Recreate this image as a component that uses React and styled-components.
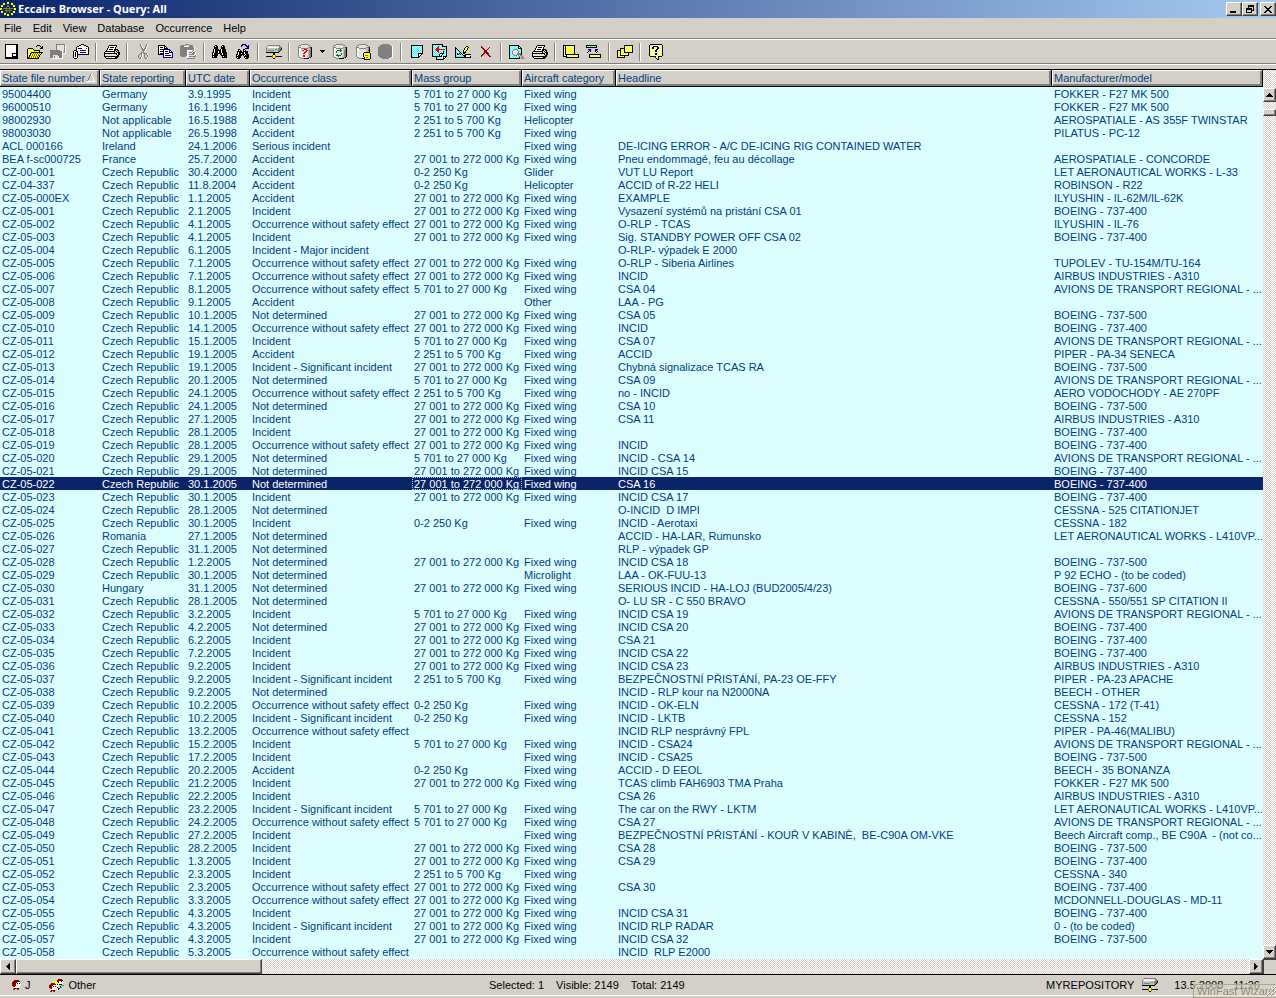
import React, { Component } from 'react';
import styled, { createGlobalStyle } from 'styled-components';

const GlobalStyle = createGlobalStyle`
  body {
    margin: 0;
    background: #d4d0c8;
    font-family: 'Liberation Sans', Arial, sans-serif;
    font-size: 11px;
    line-height: 13px;
    color: #000;
  }
  button {
    font: inherit;
    color: inherit;
    padding: 0;
    margin: 0;
    border: 0;
    background: none;
  }
`

const Window = styled.div`
  display: flex;
  flex-direction: column;
  min-height: 100vh;
  background: #d4d0c8;
`

const TitleBar = styled.header`
  display: flex;
  align-items: center;
  height: 18px;
  background: linear-gradient(to right, #0a246a, #a6caf0);
`

const Title = styled.h1`
  flex-grow: 1;
  margin: 0;
  padding-left: 1px;
  color: #fff;
  font-family: 'Noto Sans', Tahoma, sans-serif;
  font-size: 11px;
  font-weight: bold;
  line-height: 18px;
`

const WindowButtons = styled.div`
  display: flex;
`

const RaisedButton = styled.button`
  display: flex;
  align-items: center;
  justify-content: center;
  flex: none;
  box-sizing: border-box;
  width: ${props => props.$width || 16}px;
  height: ${props => props.$height || 14}px;
  margin-left: ${props => props.$gap || 0}px;
  background: #d4d0c8;
  border: 1px solid;
  border-color: #fff #404040 #404040 #fff;
  box-shadow: inset -1px -1px 0 #808080;
`

const MenuBar = styled.nav`
  display: flex;
  gap: 11px;
  height: 20px;
  padding: 0 4px;
  border-bottom: 1px solid #808080;
`

const MenuItem = styled.button`
  line-height: 20px;
`

const ToolBar = styled.div`
  display: flex;
  align-items: center;
  height: 23px;
  border-top: 1px solid #fff;
  border-bottom: 1px solid #808080;
`

const ToolButton = styled.button`
  display: flex;
  align-items: flex-start;
  justify-content: center;
  width: ${props => props.$narrow ? 12 : 23}px;
  height: 17px;
  align-items: center;
`

const Separator = styled.div`
  width: 1px;
  height: 18px;
  margin: 0 3px;
  border-left: 1px solid #808080;
  border-right: 1px solid #fff;
  box-sizing: border-box;
  flex: 0 0 2px;
`

const Gap = styled.div`
  height: 4px;
  border-top: 1px solid #fff;
`

const Sheet = styled.main`
  display: flex;
  border-top: 1px solid #000;
`

const Table = styled.table`
  flex: 1;
  width: 100%;
  min-width: 0;
  table-layout: fixed;
  border-spacing: 0;
  border-bottom: 1px solid #ddfeff;
  background: #ddfeff;
  color: #004080;
`

const Col = styled.col`
  width: ${props => props.$width ? props.$width + 'px' : 'auto'};
`

const HeadCell = styled.th`
  height: 16px;
  padding: 0;
  background: #000;
  border-bottom: 1px solid #000;
  font-weight: normal;
  text-align: left;
`

const HeadLabel = styled.div`
  display: flex;
  align-items: center;
  justify-content: space-between;
  box-sizing: border-box;
  height: 16px;
  margin-right: 1px;
  padding: 0 3px 0 1px;
  background: #d4d0c8;
  border: 1px solid;
  border-color: #fff #808080 #808080 #fff;
  box-shadow: inset -1px -1px 0 #808080;
  white-space: nowrap;
  overflow: hidden;
`

const Row = styled.tr`
  background: ${props => props.$selected ? '#0a246a' : 'transparent'};
  color: ${props => props.$selected ? '#fff' : 'inherit'};
`

const Cell = styled.td`
  height: 11px;
  padding: 2px 0 0 2px;
  line-height: 11px;
  white-space: pre;
  overflow: hidden;
  outline: ${props => props.$focused ? '1px dotted #a6caf0' : 'none'};
  outline-offset: -1px;
`

const hatch = 'repeating-conic-gradient(#fff 0 25%, #d4d0c8 0 50%) 0 0 / 2px 2px'

const VerticalScroll = styled.div`
  display: flex;
  flex-direction: column;
  flex: 0 0 13px;
  padding-top: 18px;
  background: ${hatch};
`

const VerticalTrack = styled.div`
  flex: 1;
  padding-top: 7px;
`

const HorizontalScroll = styled.div`
  display: flex;
  height: 15px;
  border-bottom: 1px solid #000;
  background: ${hatch};
`

const HorizontalTrack = styled.div`
  flex: 1;
`

const Corner = styled.div`
  box-sizing: border-box;
  width: 13px;
  background: #d4d0c8;
  border-left: 1px solid #404040;
  border-top: 1px solid #404040;
`

const StatusBar = styled.footer`
  display: grid;
  grid-template-columns: 489px 1fr auto;
  align-items: center;
  height: 20px;
  border-bottom: 1px solid #fff;
`

const StatusGroup = styled.div`
  display: flex;
  align-items: center;
  gap: ${props => props.$gap}px;
  padding: ${props => props.$padding || 0};
  white-space: nowrap;
`

const StatusItem = styled.span`
  display: flex;
  align-items: center;
  gap: 4px;
`

const Overlay = styled.div`
  position: fixed;
  right: 0;
  bottom: 0;
  box-sizing: border-box;
  width: 83px;
  height: 14px;
  padding-left: 3px;
  border: 1px solid #a8a490;
  border-right: 0;
  background: rgba(220, 216, 196, 0.6);
  color: #8c8a80;
  line-height: 13px;
  white-space: nowrap;
`

const Grip = styled.svg`
  position: absolute;
  right: 0;
  bottom: 1px;
`

const PALETTE = {
  k: '#000', w: '#fff', g: '#808080', l: '#c0c0c0', s: '#e4e4e4', y: '#ffff00', Y: '#ffff99',
  c: '#50f4fa', C: '#c0ffff', b: '#000080', B: '#3060c0', r: '#f00000', m: '#900000', n: '#007020',
  N: '#00d000', o: '#808000', p: '#e8b090',
}

const ICONS = {
  create: [
    'kkkkkkkkkkkkk', 'kwwwwwwwwwwkk', 'kwwwwwwwwwwkk', 'kwwwwwwwwwwkk', 'kwwwwwwwwwwkk',
    'kwwwwwwwwwwkk', 'kwwwwwwwwwwkk', 'kwwwwwwwwwwkk', 'kwwwwwwwwwwkk', 'kwwwwwwkkkkkk',
    'kwwwwwwkwwwkk', 'kwwwwwwkwwwkk', 'kwwwwwwkkkkkk', 'kkkkkkkkkkkkk', 'kkkkkkkkkkkkk',
  ],
  open: [
    '..........kkk...', '.........k...k.k', '..............kk', '.kkkkk.......kkk', 'kyYyYyk.........',
    'kYyYyYykkkkkk...', 'kyYyYyYyYyYyk...', 'kYyYkkkkkkkkkkkk', 'kyYkoyoyoyoyoyk.', 'kYykyoyoyoyoyk..',
    'kykoyoyoyoyok...', 'kYkyoyoyoyoyk...', 'kkoyoyoyoyok....', 'kkkkkkkkkkkk....',
  ],
  saveAll: [
    '......ggggggggg.', '......gsssssssgw', '......gsssssssgw', '......gsssssssgw', '......gsssssssgw',
    '......gsssssssgw', 'ggggggggggssssgw', 'ggggggggggggssgw', 'ggggggggggggwggw', 'ggggggggggggwwww',
    'ggggggggggggw...', 'gggsssssggggw...', 'gggsgssssgggw...', 'gggsgssssgggw...', '.wwwwwwwwwwww...',
  ],
  mail: [
    '........kkk.....', '......kkwwwkk...', '....kkwwwwwwwkk.', '...kwwwwwwwwwwwk', '...kwbbbbwwwwrwk',
    '...kwwwwwwwwwwwk', '.kkkwwwbbbbbbwwk', 'kwwkkwwwwwwwwwwk', 'kwkwkwwbbbbbbwwk', 'kwkwkwwwwwwwwwwk',
    'kwkwkkkkkkkkkkkk', 'kwkwk...........', 'kwkwk...........', 'kwwwk...........', '.kkk............',
  ],
  print: [
    '.....kkkkkkkk...', '....kwwwwwwwk...', '....kwkkkkwk....', '...kwwwwwwwk....', '...kwkkkkwkkkk..',
    '..kwwwwwwwkkskk.', '.kkkkkkkkkksksk.', 'ksssssssssksskkk', 'kkkkkkkkkkkkkskk', 'kssssssyyysskskk',
    'ksssssssssssskk.', 'kkkkkkkkkkkkkkk.', '.kssssssssskkk..', '..kkkkkkkkkkk...',
  ],
  cut: [
    '..g.....g.', '..gw....gw', '..ggw..ggw', '...gw..gw.', '...ggwggw.', '....gggw..', '....gggw..',
    '.....gw...', '...ggggw..', '..ggwgggg.', '.g.gw.g.gw', 'g..gw.g..g', 'g..gw.g..g', 'g.gw..g.gw', '.ggw...ggw',
  ],
  copy: [
    'kkkkkkk.......', 'kwwwwwkk......', 'kwkkkwkwk.....', 'kwwwwwkkkk....', 'kwkkkbbbbbbb..', 'kwwwwbwwwwwbb.',
    'kwkkkbwbbbwbwb', 'kwwwwbwwwwwbbbb', 'kwkkkbwbbbbwwwb', 'kkkkkbwwwwwwwwb', '.....bwbbbbbbwb', '.....bwwwwwwwwb', '.....bbbbbbbbbb',
  ],
  paste: [
    '.....gggg.......', '.gggg....gggg...', 'ggggwwwwwggggw..', 'ggggggggggggggw.', 'ggggggggggggggw.', 'ggggggggggggggw.',
    'gggggggwwwwwwgw.', 'gggggggwssssgw..', 'gggggggwsgggwggw', 'gggggggwssssgggw', 'gggggggwsgggggsw', 'gggggggwsssssssgw',
    '.gggggwwsggggggg', '.......wssssssgw', '.......gggggggg.',
  ],
  find: [
    '...kk.....kk....', '..kwkk...kwkk...', '..kkkk...kkkk...', '..kkkk...kkkk...', '.kwkkkk.kwkkkk..', '.kwkkkkkkwkkkk..',
    '.kwkkkwkkwkkkk..', 'kkwkkkwkkwkkkkk.', 'kwkkkkkkkkwkkkk.', 'kwkkkk..kkwkkkk.', 'kkkkkk...kkkkkk.', 'kwkkk.....kwkkk.', 'kkkkk.....kkkkk.',
  ],
  findNext: [
    '......bbbb....', '.....bb..bb.b.', '.....b....bbb.', '...........bb.', '.........bbbb.', '..kk...kk.....', '..kwk..kwk....',
    '.kkkkk.kkkkk..', '.kwkkkkkwkkk..', '.kwkkwkkwkkk..', 'kkwkkkkkkwkkk.', 'kwkkkk.kwkkkk.', 'kkkkk...kkkkk.', 'kwkkk...kwkkk.', '.kkk.....kkk..',
  ],
  drive: [
    '..gggggggggggg..', '.gsssssssssssgg.', 'gwwwwwwwwwwwwggg', 'glllllllllllgggk', 'gllllllllNNlgggk',
    'glggggggllllggk.', 'glllllllllllgk..', 'kkkkkkkkkkkkk...', '.......kk.......', '.......kk.......',
    '......oyyo......', 'kkkkkkoyyokkkkkk', '......oyyo......', '.......kk.......',
  ],
  query: [
    '....ggggggg....', '..ggsssssssgg..', '.gsssssssssssg.', '.gggsssssssgggk', '.gwwgggggggllgk', '.gwwsssrrrsllgk', '.gwssrrssrrlggk',
    '.gwsssssrrslggk', '.gwssssrrsslggk', '.gwsssrrssslggk', '.gwsssssssslggk', '.gwsssrrssslggk', '.gwwssrrssllggk', '..ggsssssslggk.', '....gggkkkkk...',
  ],
  refresh: [
    '....ggggggg....', '..ggsssssssgg..', '.gsssssssssssg.', '.gggsssssssgggk', '.gwwgggggggllgk', '.gwwssssnssllgk', '.gwssnnnnnslggk',
    '.gwsnsssnsslggk', '.gwsnsssssslggk', '.gwssssssnslggk', '.gwssnsssnslggk', '.gwsnnnnnsslggk', '.gwwssnsssllggk', '..ggsssssslggk.', '....gggkkkkk...',
  ],
  note: [
    '....ggggggg.....', '..ggsssssssgg...', '.gsssssssssssg..', '.gggsssssssgggk.', '.gwwgggggggllgk.', '.gwwsssssssllgk.', '.gwssssssssllgk.',
    '.gwssssssssllgk.', '.gwsssssskkkkkk.', '.gwssssskyyyyyyk', '.gwssssskyyyyyyk', '.gwssssskyoooyyk', '.gwwsssskyyyyyyk', '..ggssssskyooyyk', '....gggkkkyyyyyk', '.........kkkkkk.',
  ],
  stop: [
    '....ggggggg....', '..gggggggggggw.', '.gggggggggggggw', 'ggggggggggggggw', 'ggggggggggggggw', 'ggggggggggggggw', 'ggggggggggggggw',
    'ggggggggggggggw', 'ggggggggggggggw', 'ggggggggggggggw', 'ggggggggggggggw', 'ggggggggggggggw', '.gggggggggggggw', '..gggggggggggww', '....gggggggww..',
  ],
  page: [
    'kkkkkkkkkkkk', 'kcCcCcCcCcCk', 'kCcCcCcCcCck', 'kcCcCcCcCcCk', 'kCcCcCcCcCck', 'kcCcCcCcCcCk', 'kCcCcCcCcCck',
    'kcCcCcCcCcCk', 'kCcCcCckkkkk', 'kcCcCcCkwwk.', 'kCcCcCckwk..', 'kcCcCcCkk...', 'kkkkkkkk....',
  ],
  pageBack: [
    'kkkkkkkkkkk.....', 'kcCcCcCcCck.....', 'kCcCcCrcCckkkkk.', 'kcCcCrrCcCcCcCk.', 'kCcCrrrcCcCcCck.', 'kcCrrrrrrrrrrCk.', 'kCcCrrrcCcCcCck.',
    'kcCcCrrCcCckcCk.', 'kCcCcCrcCcCkCck.', 'kcCcCcCckkkkcCk.', 'kCcCcCckwwkcCck.', 'kcCcCcCkwkCcCck.', 'kkkkkkkkkkCkkkk.', '....kcCcCcCkwk..', '....kCcCcCckk...', '....kkkkkkkk....',
  ],
  design: [
    '...........kk...', 'k.........kyyk..', 'kk.......kyyk...', 'kck......kyyk...', 'kcck....kyyk....', 'kcCck...kyk.....', 'kcCCck..kkk.....',
    'kck.kck.kk......', 'kckk.kck..kkkkkk', 'kcCCCCcckkkswsws', 'kcccccccckkwwwwk', 'kkkkkkkkkkkkkkkk',
  ],
  remove: [
    'm.........', 'mm......m.', '.mm....m..', '..mm..m...', '...mmm....', '...mmm....', '...mmmm...', '..mm.mmm..', '.mm...mm..', 'mm.....mm.', 'm.......mm',
  ],
  preview: [
    'kkkkkkkkkk......', 'kcCcCcCcCkk.....', 'kCcCcCcCckwk....', 'kcCcCcCcCkkkk...', 'kCcCcgggcCcCk...', 'kcCcgwwsgcCck...', 'kCcgwssssgcCk...',
    'kcCgwssssgCck...', 'kcCgssssggggk...', 'kcCcgsssggggk...', 'kCcCcgggCgsgg...', 'kcCcCcCcCcgsgg..', 'kCcCcCcCcCkgsgg.', 'kkkkkkkkkkk.ggg.',
  ],
  notes: [
    'kkkkkkkkkkkk....', 'kwkYyYyYyYyk....', 'kwkyYyYyYyYk....', 'kwkYyYyYyYyk....', 'kwkyYyYyYyYk....', 'kwkYyYyYyYyk....', 'kwkyYyYyYyYk....',
    'kwkYyYyYyYyk....', 'kwkyYyYyYyYk....', 'kwkkkkkkkkkkkkkk', 'kwwkYyYyYyYyYyYk', 'kkkkyYyYyYyYyYyk', '...kkkkkkkkkkkkk',
  ],
  link: [
    'kkkkkkkkkkk....', 'kCcCcCcCcCk....', 'kkkkkkkkkkk....', '...............', '..bbb....bbb...', '...bb....bb....', '..b.b....b.b...',
    '.b........b....', '...............', '...kkkkkkkkkkkk', '...kYyYyYyYyYyk', '...kyYyYyYyYyYk', '...kkkkkkkkkkkk',
  ],
  cascade: [
    '.......kkkkkkkkk', '.......kYyYyYyYk', '.......kyYyYyYyk', '...kkkkkYyYyYyYk', '...kYyYkyYyYyYyk', 'kkkkyYykYyYyYyYk', 'kYykYyYkyYyYyYyk',
    'kyYkyYykkkkkkkkk', 'kYykYyYyYyYk....', 'kyYkyYyYyYyk....', 'kYykkkkkkkkk....', 'kyYyYyYk........', 'kkkkkkkk........',
  ],
  help: [
    '.kkkkkkkkkkkk.', 'kYYYYYYYYYYYYk', 'kYYYbbbbbYYYYk', 'kYYbbYYYbbYYYk', 'kYYbbYYYbbYYYk', 'kYYYYYYbbYYYYk', 'kYYYYYbbYYYYYk',
    'kYYYYYbbYYYYYk', 'kYYYYYYYYYYYYk', 'kYYYYYbbYYYYYk', 'kYYYYYbbYYYYYk', 'kYYYYYYYYYYYYk', '.kkkkkkYYkkkk.', '......kYYk....', '.......kYk....', '........kk....',
  ],
  person: [
    '..mmmmm..', '.mmmmmmm.', 'mmmmmwww.', 'mmmmwkwb.', 'mmmmwwwww', 'mmmmwwww.', '.mmwwwww.', '..wwwww..', '..krrrk..', '.rr..rr..',
  ],
  people: [
    '.........mmmm...', '........mmmmmm..', '.....yyymmwwbw..', '....yyyyymwwwww.', '..mmmmyyywwwww..', '.mmmmmmwbwkkk...', 'mmmmwwwyww..NNN.',
    'mmmwkwbww..k....', 'mmmwwwwwk..NN...', '.mmwwwww.bb.....', '..wwwww..b......', '..krrk..........', '.rr.rr..........',
  ],
  minimize: ['........', '........', '........', '........', '........', '........', 'kkkkkk..', 'kkkkkk..'],
  restore: ['..kkkkkk', '..kkkkkk', '..k....k', 'kkkkkk.k', 'kkkkkk.k', 'k....kkk', 'k....k..', 'kkkkkk..'],
  close: ['kk....kk', '.kk..kk.', '..kkkk..', '...kk...', '..kkkk..', '.kk..kk.', 'kk....kk'],
  up: ['...k...', '..kkk..', '.kkkkk.', 'kkkkkkk'],
  down: ['kkkkkkk', '.kkkkk.', '..kkk..', '...k...'],
  left: ['...k', '..kk', '.kkk', 'kkkk', '.kkk', '..kk', '...k'],
  right: ['k...', 'kk..', 'kkk.', 'kkkk', 'kkk.', 'kk..', 'k...'],
  dropdown: ['kkkkk', '.kkk.', '..k..'],
  sort: ['....gw...', '....gw...', '...g..w..', '...g..w..', '..g....w.', '..g....w.', '.g......w', '.wwwwwwww'],
}

// one rect for every run of equal pixels in a line
const PixelIcon = ({ name }) => {
  const lines = ICONS[name];
  const width = Math.max(...lines.map(line => line.length));
  const rects = [];
  lines.forEach((line, y) => {
    let x = 0;
    while (x < line.length) {
      let end = x + 1;
      while (line[end] === line[x]) end++;
      if (line[x] !== '.') {
        rects.push(<rect key={x + '-' + y} x={x} y={y} width={end - x} height={1} fill={PALETTE[line[x]]} />)
      }
      x = end;
    }
  })
  return (
    <svg width={width} height={lines.length} shapeRendering="crispEdges" aria-hidden="true">
      {rects}
    </svg>
  )
}

const Logo = () => {
  const stars = [];
  for (let i = 0; i < 12; i++) {
    const angle = i * Math.PI / 6;
    stars.push(<rect key={i} x={Math.round(8 + 7 * Math.cos(angle)) - 1} y={Math.round(8 + 6 * Math.sin(angle)) - 1} width="2" height="2" fill="#ffff00" />)
  }
  return (
    <svg width="17" height="16" shapeRendering="crispEdges" aria-hidden="true">
      {stars}
      <path d="M7 4h2v2h-2zM3 7h11v1h-11zM5 9h7v1h-7zM6 6h1v6h-1zM9 6h1v6h-1z" fill="#808000" />
    </svg>
  )
}

const TOOLS = [
  ['create', 'open', 'saveAll', 'mail'],
  ['print'],
  ['cut', 'copy', 'paste'],
  ['find', 'findNext'],
  ['drive'],
  ['query', 'dropdown', 'refresh', 'note', 'stop'],
  ['page', 'pageBack', 'design', 'remove'],
  ['preview', 'print'],
  ['notes', 'link'],
  ['cascade'],
  ['help'],
]

const COLUMNS = [
  { title: 'State file number', width: 100, sorted: true },
  { title: 'State reporting', width: 86 },
  { title: 'UTC date', width: 64 },
  { title: 'Occurrence class', width: 162 },
  { title: 'Mass group', width: 110 },
  { title: 'Aircraft category', width: 94 },
  { title: 'Headline' },
  { title: 'Manufacturer/model', width: 211 },
]

const CZ = 'Czech Republic';
const INC = 'Incident';
const ACC = 'Accident';
const SIG = 'Incident - Significant incident';
const OWSE = 'Occurrence without safety effect';
const ND = 'Not determined';
const M0 = '0-2 250 Kg';
const M2 = '2 251 to 5 700 Kg';
const M5 = '5 701 to 27 000 Kg';
const M27 = '27 001 to 272 000 Kg';
const FW = 'Fixed wing';
const B4 = 'BOEING - 737-400';
const B5 = 'BOEING - 737-500';
const AIRBUS = 'AIRBUS INDUSTRIES - A310';
const ATR = 'AVIONS DE TRANSPORT REGIONAL - ...';
const LET = 'LET AERONAUTICAL WORKS - L410VP...';

const ROWS = [
  ['95004400', 'Germany', '3.9.1995', INC, M5, FW, '', 'FOKKER - F27 MK 500'],
  ['96000510', 'Germany', '16.1.1996', INC, M5, FW, '', 'FOKKER - F27 MK 500'],
  ['98002930', 'Not applicable', '16.5.1988', ACC, M2, 'Helicopter', '', 'AEROSPATIALE - AS 355F TWINSTAR'],
  ['98003030', 'Not applicable', '26.5.1998', ACC, M2, FW, '', 'PILATUS - PC-12'],
  ['ACL 000166', 'Ireland', '24.1.2006', 'Serious incident', '', FW, 'DE-ICING ERROR - A/C DE-ICING RIG CONTAINED WATER', ''],
  ['BEA f-sc000725', 'France', '25.7.2000', ACC, M27, FW, 'Pneu endommagé, feu au décollage', 'AEROSPATIALE - CONCORDE'],
  ['CZ-00-001', CZ, '30.4.2000', ACC, M0, 'Glider', 'VUT LU Report', 'LET AERONAUTICAL WORKS - L-33'],
  ['CZ-04-337', CZ, '11.8.2004', ACC, M0, 'Helicopter', 'ACCID of R-22 HELI', 'ROBINSON - R22'],
  ['CZ-05-000EX', CZ, '1.1.2005', ACC, M27, FW, 'EXAMPLE', 'ILYUSHIN - IL-62M/IL-62K'],
  ['CZ-05-001', CZ, '2.1.2005', INC, M27, FW, 'Vysazení systémů na pristání CSA 01', B4],
  ['CZ-05-002', CZ, '4.1.2005', OWSE, M27, FW, 'O-RLP - TCAS', 'ILYUSHIN - IL-76'],
  ['CZ-05-003', CZ, '4.1.2005', INC, M27, FW, 'Sig. STANDBY POWER OFF CSA 02', B4],
  ['CZ-05-004', CZ, '6.1.2005', 'Incident - Major incident', '', '', 'O-RLP- výpadek E 2000', ''],
  ['CZ-05-005', CZ, '7.1.2005', OWSE, M27, FW, 'O-RLP - Siberia Airlines', 'TUPOLEV - TU-154M/TU-164'],
  ['CZ-05-006', CZ, '7.1.2005', OWSE, M27, FW, 'INCID', AIRBUS],
  ['CZ-05-007', CZ, '8.1.2005', OWSE, M5, FW, 'CSA 04', ATR],
  ['CZ-05-008', CZ, '9.1.2005', ACC, '', 'Other', 'LAA - PG', ''],
  ['CZ-05-009', CZ, '10.1.2005', ND, M27, FW, 'CSA 05', B5],
  ['CZ-05-010', CZ, '14.1.2005', OWSE, M27, FW, 'INCID', B4],
  ['CZ-05-011', CZ, '15.1.2005', INC, M5, FW, 'CSA 07', ATR],
  ['CZ-05-012', CZ, '19.1.2005', ACC, M2, FW, 'ACCID', 'PIPER - PA-34 SENECA'],
  ['CZ-05-013', CZ, '19.1.2005', SIG, M27, FW, 'Chybná signalizace TCAS RA', B5],
  ['CZ-05-014', CZ, '20.1.2005', ND, M5, FW, 'CSA 09', ATR],
  ['CZ-05-015', CZ, '24.1.2005', OWSE, M2, FW, 'no - INCID', 'AERO VODOCHODY - AE 270PF'],
  ['CZ-05-016', CZ, '24.1.2005', ND, M27, FW, 'CSA 10', B5],
  ['CZ-05-017', CZ, '27.1.2005', INC, M27, FW, 'CSA 11', AIRBUS],
  ['CZ-05-018', CZ, '28.1.2005', INC, M27, FW, '', B4],
  ['CZ-05-019', CZ, '28.1.2005', OWSE, M27, FW, 'INCID', B4],
  ['CZ-05-020', CZ, '29.1.2005', ND, M5, FW, 'INCID - CSA 14', ATR],
  ['CZ-05-021', CZ, '29.1.2005', ND, M27, FW, 'INCID CSA 15', B4],
  ['CZ-05-022', CZ, '30.1.2005', ND, M27, FW, 'CSA 16', B4],
  ['CZ-05-023', CZ, '30.1.2005', INC, M27, FW, 'INCID CSA 17', B4],
  ['CZ-05-024', CZ, '28.1.2005', ND, '', '', 'O-INCID  D IMPI', 'CESSNA - 525 CITATIONJET'],
  ['CZ-05-025', CZ, '30.1.2005', INC, M0, FW, 'INCID - Aerotaxi', 'CESSNA - 182'],
  ['CZ-05-026', 'Romania', '27.1.2005', ND, '', '', 'ACCID - HA-LAR, Rumunsko', LET],
  ['CZ-05-027', CZ, '31.1.2005', ND, '', '', 'RLP - výpadek GP', ''],
  ['CZ-05-028', CZ, '1.2.2005', ND, M27, FW, 'INCID CSA 18', B5],
  ['CZ-05-029', CZ, '30.1.2005', ND, '', 'Microlight', 'LAA - OK-FUU-13', 'P 92 ECHO - (to be coded)'],
  ['CZ-05-030', 'Hungary', '31.1.2005', ND, M27, FW, 'SERIOUS INCID - HA-LOJ (BUD2005/4/23)', 'BOEING - 737-600'],
  ['CZ-05-031', CZ, '28.1.2005', ND, '', '', 'O- LU SR - C 550 BRAVO', 'CESSNA - 550/551 SP CITATION II'],
  ['CZ-05-032', CZ, '3.2.2005', INC, M5, FW, 'INCID CSA 19', ATR],
  ['CZ-05-033', CZ, '4.2.2005', ND, M27, FW, 'INCID CSA 20', B4],
  ['CZ-05-034', CZ, '6.2.2005', INC, M27, FW, 'CSA 21', B4],
  ['CZ-05-035', CZ, '7.2.2005', INC, M27, FW, 'INCID CSA 22', B4],
  ['CZ-05-036', CZ, '9.2.2005', INC, M27, FW, 'INCID CSA 23', AIRBUS],
  ['CZ-05-037', CZ, '9.2.2005', SIG, M2, FW, 'BEZPEČNOSTNÍ PŘISTÁNÍ, PA-23 OE-FFY', 'PIPER - PA-23 APACHE'],
  ['CZ-05-038', CZ, '9.2.2005', ND, '', '', 'INCID - RLP kour na N2000NA', 'BEECH - OTHER'],
  ['CZ-05-039', CZ, '10.2.2005', OWSE, M0, FW, 'INCID - OK-ELN', 'CESSNA - 172 (T-41)'],
  ['CZ-05-040', CZ, '10.2.2005', SIG, M0, FW, 'INCID - LKTB', 'CESSNA - 152'],
  ['CZ-05-041', CZ, '13.2.2005', OWSE, '', '', 'INCID RLP nesprávný FPL', 'PIPER - PA-46(MALIBU)'],
  ['CZ-05-042', CZ, '15.2.2005', INC, M5, FW, 'INCID - CSA24', ATR],
  ['CZ-05-043', CZ, '17.2.2005', INC, '', FW, 'INCID - CSA25', B5],
  ['CZ-05-044', CZ, '20.2.2005', ACC, M0, FW, 'ACCID - D EEOL', 'BEECH - 35 BONANZA'],
  ['CZ-05-045', CZ, '21.2.2005', INC, M27, FW, 'TCAS climb FAH6903 TMA Praha', 'FOKKER - F27 MK 500'],
  ['CZ-05-046', CZ, '22.2.2005', INC, '', '', 'CSA 26', AIRBUS],
  ['CZ-05-047', CZ, '23.2.2005', SIG, M5, FW, 'The car on the RWY - LKTM', LET],
  ['CZ-05-048', CZ, '24.2.2005', OWSE, M5, FW, 'CSA 27', ATR],
  ['CZ-05-049', CZ, '27.2.2005', INC, '', FW, 'BEZPEČNOSTNÍ PŘISTÁNÍ - KOUŘ V KABINĚ,  BE-C90A OM-VKE', 'Beech Aircraft comp., BE C90A  - (not co...'],
  ['CZ-05-050', CZ, '28.2.2005', INC, M27, FW, 'CSA 28', B5],
  ['CZ-05-051', CZ, '1.3.2005', INC, M27, FW, 'CSA 29', B4],
  ['CZ-05-052', CZ, '2.3.2005', INC, M2, FW, '', 'CESSNA - 340'],
  ['CZ-05-053', CZ, '2.3.2005', OWSE, M27, FW, 'CSA 30', B4],
  ['CZ-05-054', CZ, '3.3.2005', OWSE, M27, FW, '', 'MCDONNELL-DOUGLAS - MD-11'],
  ['CZ-05-055', CZ, '4.3.2005', INC, M27, FW, 'INCID CSA 31', B4],
  ['CZ-05-056', CZ, '4.3.2005', SIG, M27, FW, 'INCID RLP RADAR', '0 - (to be coded)'],
  ['CZ-05-057', CZ, '4.3.2005', INC, M27, FW, 'INCID CSA 32', B5],
  ['CZ-05-058', CZ, '5.3.2005', OWSE, '', '', 'INCID  RLP E2000', ''],
]

class App extends Component {
  state = { row: 30, column: 4 }

  onSelect = (row, column) => {
    this.setState({ row, column });
  }

  renderTitleBar = () => {
    return (
      <TitleBar>
        <Logo />
        <Title>Eccairs Browser - Query: All</Title>
        <WindowButtons>
          <RaisedButton aria-label="Minimize"><PixelIcon name="minimize" /></RaisedButton>
          <RaisedButton aria-label="Restore"><PixelIcon name="restore" /></RaisedButton>
          <RaisedButton $gap={2} aria-label="Close"><PixelIcon name="close" /></RaisedButton>
        </WindowButtons>
      </TitleBar>
    )
  }

  renderMenu = () => {
    const items = ['File', 'Edit', 'View', 'Database', 'Occurrence', 'Help'];
    return (
      <MenuBar>
        {items.map(item => <MenuItem key={item}>{item}</MenuItem>)}
      </MenuBar>
    )
  }

  renderTools = () => {
    return (
      <ToolBar>
        {TOOLS.map((group, index) => (
          <React.Fragment key={index}>
            {index > 0 && <Separator />}
            {group.map(name => (
              <ToolButton key={name} $narrow={name === 'dropdown'} aria-label={name}>
                <PixelIcon name={name} />
              </ToolButton>
            ))}
          </React.Fragment>
        ))}
      </ToolBar>
    )
  }

  renderTable = () => {
    const { row, column } = this.state;
    return (
      <Table>
        <colgroup>
          {COLUMNS.map(col => <Col key={col.title} $width={col.width} />)}
        </colgroup>
        <thead>
          <tr>
            {COLUMNS.map(col => (
              <HeadCell key={col.title}>
                <HeadLabel>
                  {col.title}
                  {col.sorted && <PixelIcon name="sort" />}
                </HeadLabel>
              </HeadCell>
            ))}
          </tr>
        </thead>
        <tbody>
          {ROWS.map((cells, y) => (
            <Row key={cells[0]} $selected={y === row}>
              {cells.map((cell, x) => (
                <Cell key={x} $focused={y === row && x === column} onClick={() => this.onSelect(y, x)}>
                  {cell}
                </Cell>
              ))}
            </Row>
          ))}
        </tbody>
      </Table>
    )
  }

  renderStatus = () => {
    return (
      <StatusBar>
        <StatusGroup $gap={18} $padding="0 0 0 12px">
          <StatusItem><PixelIcon name="person" />J</StatusItem>
          <StatusItem><PixelIcon name="people" />Other</StatusItem>
        </StatusGroup>
        <StatusGroup $gap={12}>
          <span>Selected: 1</span>
          <span>Visible: 2149</span>
          <span>Total: 2149</span>
        </StatusGroup>
        <StatusGroup $gap={8} $padding="0 16px 0 0">
          <span>MYREPOSITORY</span>
          <PixelIcon name="drive" />
          <StatusGroup $gap={10} $padding="0 0 0 8px">
            <span>13.5.2008</span>
            <span>11:26</span>
          </StatusGroup>
        </StatusGroup>
      </StatusBar>
    )
  }

  render() {
    return (
      <Window>
        <GlobalStyle />
        {this.renderTitleBar()}
        {this.renderMenu()}
        {this.renderTools()}
        <Gap />
        <Sheet>
          {this.renderTable()}
          <VerticalScroll>
            <RaisedButton $width={13} aria-label="Scroll up"><PixelIcon name="up" /></RaisedButton>
            <VerticalTrack>
              <RaisedButton $width={13} $height={7} aria-label="Vertical position" />
            </VerticalTrack>
            <RaisedButton $width={13} aria-label="Scroll down"><PixelIcon name="down" /></RaisedButton>
          </VerticalScroll>
        </Sheet>
        <HorizontalScroll>
          <RaisedButton $height={15} aria-label="Scroll left"><PixelIcon name="left" /></RaisedButton>
          <HorizontalTrack>
            <RaisedButton $width={246} $height={15} aria-label="Horizontal position" />
          </HorizontalTrack>
          <RaisedButton $width={14} $height={15} aria-label="Scroll right"><PixelIcon name="right" /></RaisedButton>
          <Corner />
        </HorizontalScroll>
        {this.renderStatus()}
        <Overlay>
          WinFast Wizard
          <Grip width="10" height="10" aria-hidden="true">
            <path d="M0 10L10 0M4 10L10 4M8 10L10 8" stroke="#fff" />
            <path d="M1 10L10 1M5 10L10 5" stroke="#909088" />
          </Grip>
        </Overlay>
      </Window>
    )
  }
}

export default App;
